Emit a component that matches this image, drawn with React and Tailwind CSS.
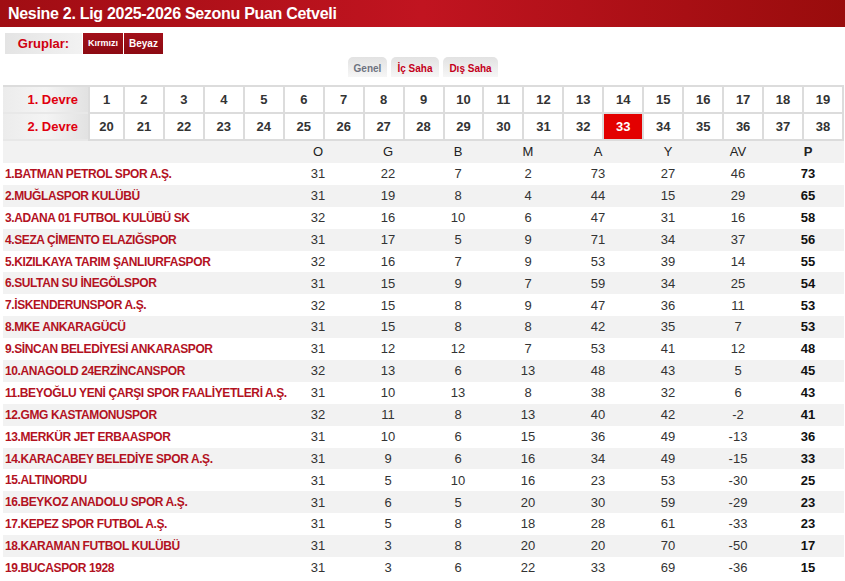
import React from 'react';

const teams = [
  ['1.BATMAN PETROL SPOR A.Ş.', 31, 22, 7, 2, 73, 27, 46, 73],
  ['2.MUĞLASPOR KULÜBÜ', 31, 19, 8, 4, 44, 15, 29, 65],
  ['3.ADANA 01 FUTBOL KULÜBÜ SK', 32, 16, 10, 6, 47, 31, 16, 58],
  ['4.SEZA ÇİMENTO ELAZIĞSPOR', 31, 17, 5, 9, 71, 34, 37, 56],
  ['5.KIZILKAYA TARIM ŞANLIURFASPOR', 32, 16, 7, 9, 53, 39, 14, 55],
  ['6.SULTAN SU İNEGÖLSPOR', 31, 15, 9, 7, 59, 34, 25, 54],
  ['7.İSKENDERUNSPOR A.Ş.', 32, 15, 8, 9, 47, 36, 11, 53],
  ['8.MKE ANKARAGÜCÜ', 31, 15, 8, 8, 42, 35, 7, 53],
  ['9.SİNCAN BELEDİYESİ ANKARASPOR', 31, 12, 12, 7, 53, 41, 12, 48],
  ['10.ANAGOLD 24ERZİNCANSPOR', 32, 13, 6, 13, 48, 43, 5, 45],
  ['11.BEYOĞLU YENİ ÇARŞI SPOR FAALİYETLERİ A.Ş.', 31, 10, 13, 8, 38, 32, 6, 43],
  ['12.GMG KASTAMONUSPOR', 32, 11, 8, 13, 40, 42, -2, 41],
  ['13.MERKÜR JET ERBAASPOR', 31, 10, 6, 15, 36, 49, -13, 36],
  ['14.KARACABEY BELEDİYE SPOR A.Ş.', 31, 9, 6, 16, 34, 49, -15, 33],
  ['15.ALTINORDU', 31, 5, 10, 16, 23, 53, -30, 25],
  ['16.BEYKOZ ANADOLU SPOR A.Ş.', 31, 6, 5, 20, 30, 59, -29, 23],
  ['17.KEPEZ SPOR FUTBOL A.Ş.', 31, 5, 8, 18, 28, 61, -33, 23],
  ['18.KARAMAN FUTBOL KULÜBÜ', 31, 3, 8, 20, 20, 70, -50, 17],
  ['19.BUCASPOR 1928', 31, 3, 6, 22, 33, 69, -36, 15],
];

const cols = ['O', 'G', 'B', 'M', 'A', 'Y', 'AV'];

const WeekRow = ({ label, start }) => (
  <div className="flex h-[27px]">
    <div className="w-[85px] flex items-center justify-end pr-[10px] text-[13px] font-bold text-[#e0000f] bg-gradient-to-r from-[#ececec] via-[#f4f4f4] to-[#e2e2e2] border-b-2 border-[#e8e8e8]">
      {label}
    </div>
    <div className="flex-1 grid grid-cols-[35px_repeat(18,1fr)] border-l-2 border-[#dcdcdc]">
      {Array.from({ length: 19 }, (_, i) => {
        const n = start + i;
        const active = n === 33;
        return (
          <div
            key={n}
            className={
              'flex items-center justify-center text-[13px] font-bold border-r-2 border-b-2 border-[#dcdcdc] ' +
              (active ? 'bg-[#e30000] text-white' : 'bg-white text-[#333]')
            }
          >
            {n}
          </div>
        );
      })}
    </div>
  </div>
);

export default function App() {
  return (
    <div className="w-[845px] h-[581px] bg-white overflow-hidden" style={{ fontFamily: '"Liberation Sans", Arial, sans-serif' }}>
      {/* title bar */}
      <div className="h-[27px] flex items-center px-[8px] bg-gradient-to-r from-[#a00d13] via-[#c11420] to-[#990c0c]">
        <h1 className="text-white text-[16px] font-bold tracking-[-0.3px]">Nesine 2. Lig 2025-2026 Sezonu Puan Cetveli</h1>
      </div>

      {/* groups */}
      <div className="flex items-center mt-[6px] ml-[5px] h-[21px]">
        <div className="w-[77px] h-full flex items-center justify-center bg-gradient-to-r from-[#e4e4e4] to-[#f2f2f2] text-[#d0000f] font-bold text-[13px]">
          Gruplar:
        </div>
        <div className="ml-[1px] h-full px-[5px] flex items-center bg-gradient-to-b from-[#a3101a] to-[#8c0a12] text-white text-[9px] font-bold">Kırmızı</div>
        <div className="ml-[1px] h-full px-[5px] flex items-center bg-gradient-to-b from-[#a3101a] to-[#8c0a12] text-white text-[10px] font-bold">Beyaz</div>
      </div>

      {/* tabs */}
      <div className="flex justify-center gap-[4px] mt-[3px] h-[20px] pl-[1px]">
        <div className="w-[39px] rounded-t-[5px] bg-gradient-to-b from-[#e2e2e2] to-[#f6f6f6] flex items-end justify-center pb-[1px] text-[10px] font-bold text-[#6e7380]">Genel</div>
        <div className="w-[48px] rounded-t-[5px] bg-gradient-to-b from-[#e2e2e2] to-[#f6f6f6] flex items-end justify-center pb-[1px] text-[10px] font-bold text-[#c4001a]">İç Saha</div>
        <div className="w-[55px] rounded-t-[5px] bg-gradient-to-b from-[#e2e2e2] to-[#f6f6f6] flex items-end justify-center pb-[1px] text-[10px] font-bold text-[#c4001a]">Dış Saha</div>
      </div>

      {/* table */}
      <div className="ml-[3px] mr-[1px] mt-[8px]">
        <div className="border-t-2 border-[#dcdcdc]">
          <WeekRow label="1. Devre" start={1} />
          <WeekRow label="2. Devre" start={20} />
        </div>

        <div className="flex h-[22px] bg-[#f2f2f2] items-center text-[13px] text-[#222]">
          <div className="w-[280px]" />
          {cols.map((c) => (
            <div key={c} className="w-[70px] text-center">{c}</div>
          ))}
          <div className="w-[70px] text-center font-bold">P</div>
        </div>

        {teams.map((t, i) => (
          <div key={t[0]} className={'flex h-[21.9px] items-center ' + (i % 2 ? 'bg-[#f2f2f2]' : 'bg-white')}>
            <div className="w-[280px] pl-[2px] text-[12px] font-bold text-[#b3121f] tracking-[-0.4px] whitespace-nowrap">{t[0]}</div>
            {t.slice(1, 8).map((v, j) => (
              <div key={j} className="w-[70px] text-center text-[13px] text-[#333]">{v}</div>
            ))}
            <div className="w-[70px] text-center text-[13px] font-bold text-[#111]">{t[8]}</div>
          </div>
        ))}
      </div>
    </div>
  );
}
